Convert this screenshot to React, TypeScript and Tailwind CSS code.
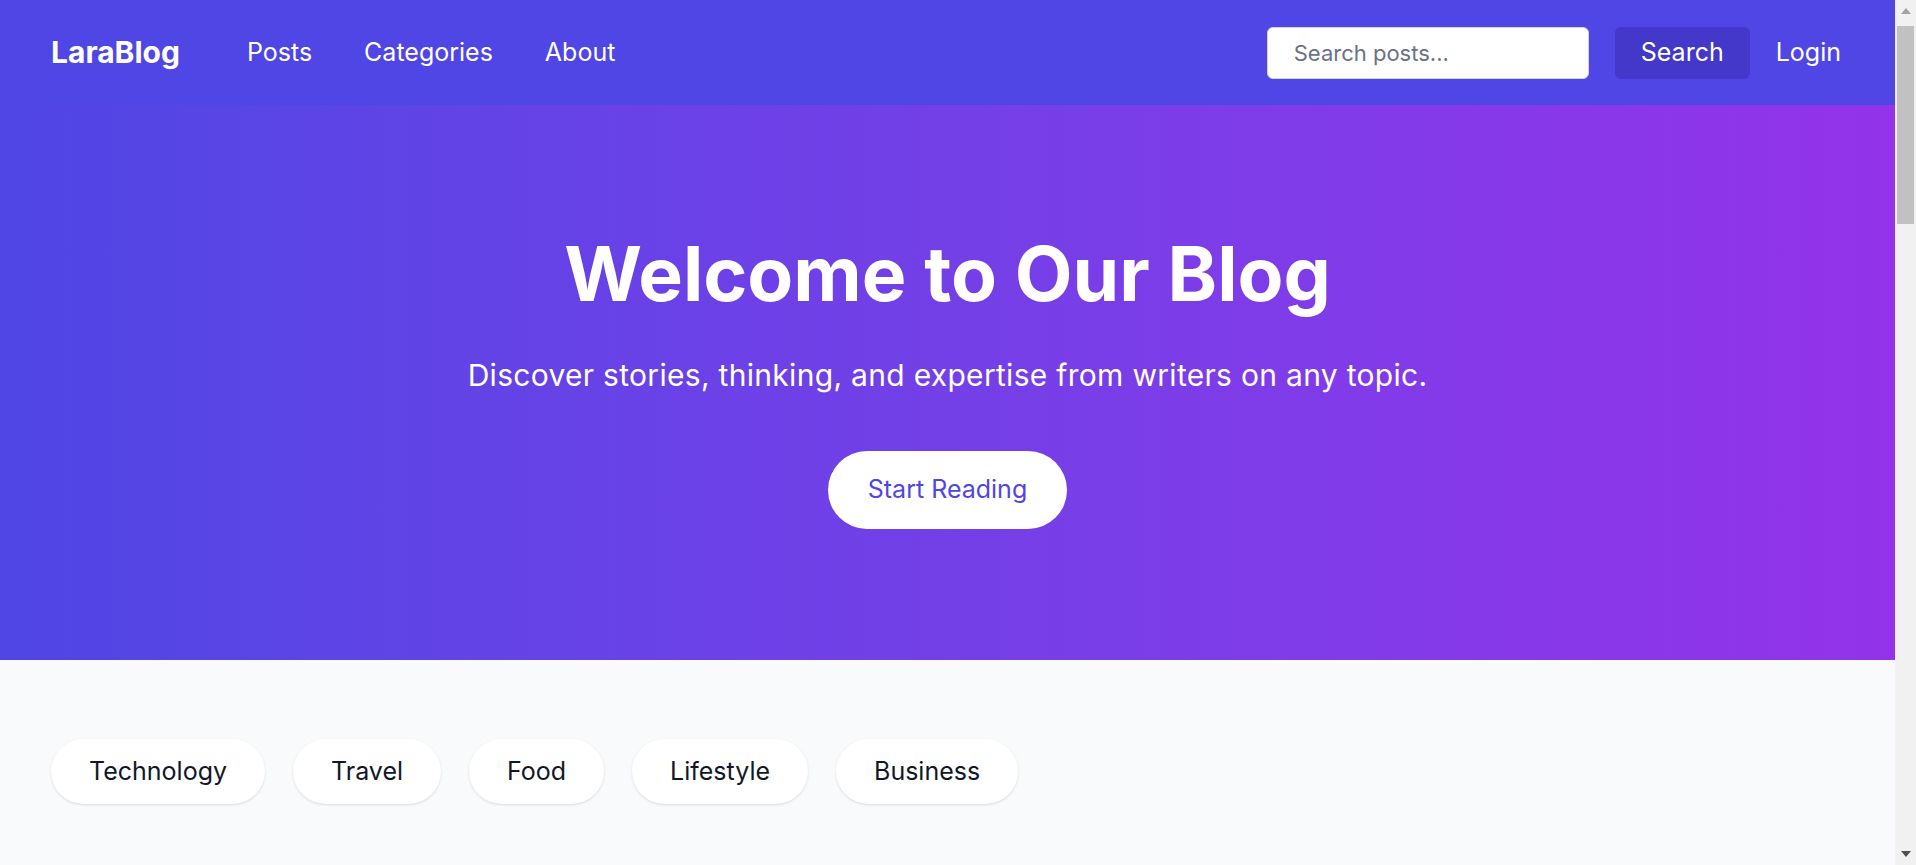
import React from 'react'

const categories = ['Technology', 'Travel', 'Food', 'Lifestyle', 'Business']

function Scrollbar() {
  return (
    <div className="w-[21px] shrink-0 bg-[#f1f1f1] flex flex-col">
      <div className="h-[22px] flex items-center justify-center">
        <svg width="10" height="6" viewBox="0 0 10 6">
          <path d="M5 0 L10 6 L0 6 Z" fill="#a3a3a3" />
        </svg>
      </div>
      <div className="mx-[2px] mt-[4px] h-[198px] bg-[#c1c1c1]" />
      <div className="flex-1" />
      <div className="h-[22px] flex items-center justify-center">
        <svg width="10" height="6" viewBox="0 0 10 6">
          <path d="M0 0 L10 0 L5 6 Z" fill="#505050" />
        </svg>
      </div>
    </div>
  )
}

export default function App() {
  return (
    <div className="h-screen flex overflow-hidden bg-gray-50 font-['Inter','Liberation_Sans',sans-serif]">
      <main className="flex-1 min-w-0">
        {/* Navbar */}
        <nav className="bg-[#4f46e5] text-white">
          <div className="h-[105px] pl-[51px] pr-[54px] flex items-center justify-between">
            <div className="flex items-center">
              <a href="#" className="text-[30px] font-bold">LaraBlog</a>
              <div className="flex items-center gap-[52px] ml-[67px] text-[25px]">
                <a href="#">Posts</a>
                <a href="#">Categories</a>
                <a href="#">About</a>
              </div>
            </div>
            <div className="flex items-center">
              <input
                type="text"
                placeholder="Search posts..."
                className="w-[322px] h-[52px] px-[26px] rounded-md border border-gray-300 bg-white text-[22px] text-gray-900 placeholder:text-gray-500 outline-none"
              />
              <button className="ml-[26px] h-[52px] px-[26px] rounded-md bg-[#4338ca] text-[25px]">
                Search
              </button>
              <a href="#" className="ml-[26px] text-[25px]">Login</a>
            </div>
          </div>
        </nav>

        {/* Hero */}
        <section className="bg-gradient-to-r from-[#4f46e5] to-[#9333ea] text-white">
          <div className="pt-[131px] pb-[131px] flex flex-col items-center text-center">
            <h1 className="text-[75px] leading-[75px] font-bold">Welcome to Our Blog</h1>
            <p className="mt-[44px] text-[30px] leading-[40px] tracking-[0.3px]">
              Discover stories, thinking, and expertise from writers on any topic.
            </p>
            <a href="#" className="mt-[56px] h-[78px] px-[40px] flex items-center rounded-full bg-white text-[#4f46e5] text-[25px]">
              Start Reading
            </a>
          </div>
        </section>

        {/* Categories */}
        <section className="px-[51px] pt-[79px]">
          <div className="flex flex-wrap gap-[28px]">
            {categories.map((c) => (
              <a
                key={c}
                href="#"
                className="h-[65px] px-[38px] flex items-center rounded-full bg-white shadow-sm text-[25px] text-gray-900"
              >
                {c}
              </a>
            ))}
          </div>
        </section>
      </main>
      <Scrollbar />
    </div>
  )
}
